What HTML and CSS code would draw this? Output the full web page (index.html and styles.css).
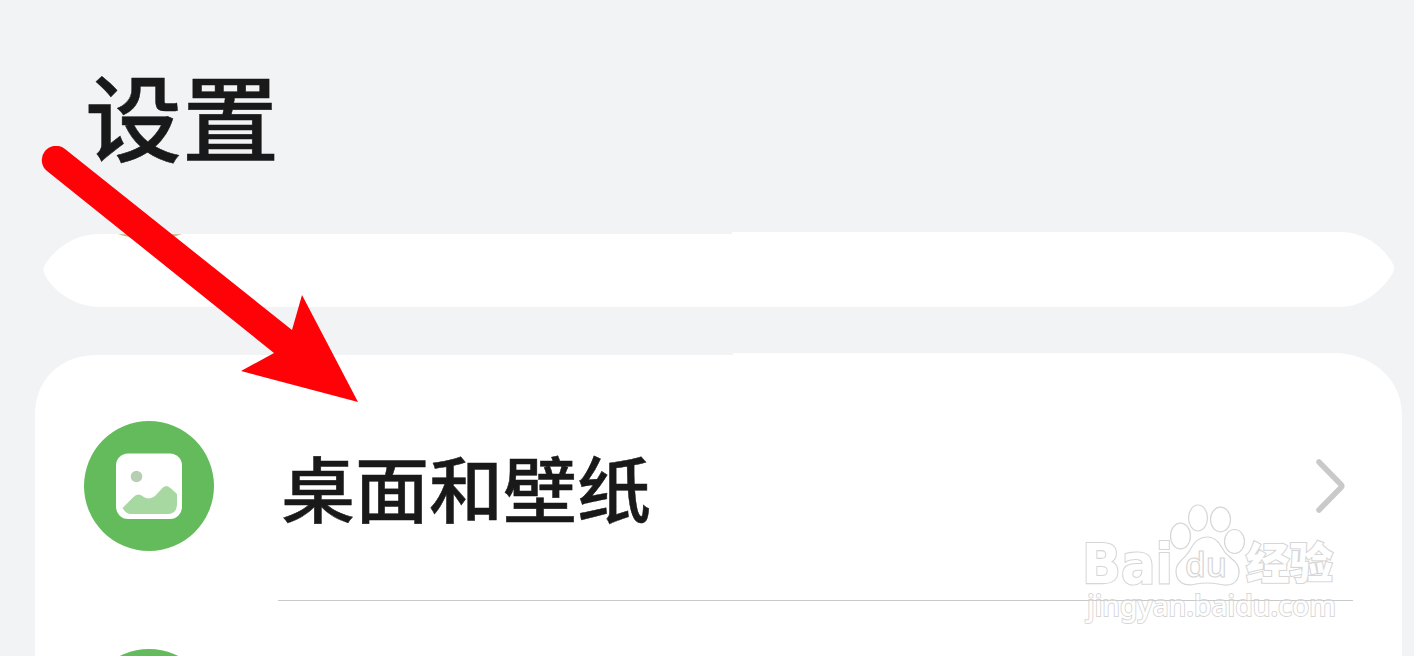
FILE: index.html
```html
<!DOCTYPE html>
<html lang="zh-CN">
<head>
<meta charset="utf-8">
<title>设置</title>
<link rel="stylesheet" href="styles.css">
</head>
<body>
<main class="screen">
  <header class="header"><h1 class="title">设置</h1></header>
  <section class="strip"><span class="strip-mark"></span></section>
  <section class="card">
    <div class="row">
      <svg class="badge" viewBox="0 0 130 130">
        <circle cx="65" cy="65" r="65" fill="#64bb5c"/>
        <rect x="32" y="32.5" width="66" height="65.5" rx="12" fill="#fff"/>
        <circle cx="52.5" cy="55.5" r="5.8" fill="#b7cfb1"/>
        <path d="M38.500 87L49 76.500Q54 71 59 75.500Q65 79.500 71 75L77 68.500Q81.500 62 87 67.500L93 73V83Q93 93 83 93H47Q42 93 38.500 87Z" fill="#a8d8a1"/>
      </svg>
      <div class="row-body">
        <span class="label">桌面和壁纸</span>
        <svg class="chevron" viewBox="0 0 30 54"><path d="M3 3L25 25.500Q26.500 27 25 28.500L3 51" fill="none" stroke="#c9c9c9" stroke-width="5.5" stroke-linecap="round"/></svg>
      </div>
    </div>
    <div class="row row-next">
      <svg class="badge" viewBox="0 0 130 130"><circle cx="65" cy="65" r="65" fill="#64bb5c"/></svg>
    </div>
  </section>
</main>
<svg class="arrow" viewBox="0 0 340 280">
  <path d="M7 25A14 14 0 1 1 25 3L252 184L262 149L318 256L201 225L234 207Z" fill="#ff0208"/>
</svg>
<svg class="watermark" viewBox="1070 490 290 145">
  <g fill="#fff" stroke="#d6d6d6" stroke-width="1.2">
    <text x="1082" y="582.500" font-size="55" textLength="91" lengthAdjust="spacingAndGlyphs" class="wm-latin wm-outline">Bai</text>
    <ellipse cx="1180.5" cy="536" rx="10" ry="12.8"/>
    <ellipse cx="1198" cy="518" rx="9.5" ry="13"/>
    <ellipse cx="1220.5" cy="519.5" rx="10" ry="12.3"/>
    <ellipse cx="1234.5" cy="541.5" rx="10" ry="12"/>
    <path d="M1207 537C1216 537 1220 544 1224 551C1229 559 1240 561 1239 573C1238 584 1230 587 1218 584Q1207 582 1196 584C1184 587 1176 582 1176 571C1176 562 1185 559 1190 550C1194 542 1199 537 1207 537Z"/>
    <text class="wm-du" x="1185" y="577" font-size="34" textLength="42" lengthAdjust="spacingAndGlyphs">du</text>
    <text class="wm-cjk wm-outline" x="1246" y="579" font-size="43" textLength="87" lengthAdjust="spacingAndGlyphs">经验</text>
    <text class="wm-url" x="1087" y="616" font-size="28" textLength="249" lengthAdjust="spacingAndGlyphs">jingyan.baidu.com</text>
  </g>
  <path d="M1070 600.500H1353" stroke="#c9c9c9" stroke-width="1" opacity=".7"/>
</svg>
</body>
</html>
```
FILE: styles.css
```css
* { box-sizing: border-box; }
body {
  margin: 0;
  width: 1414px;
  height: 656px;
  overflow: hidden;
  position: relative;
  background: #f1f3f5;
  font-family: "Noto Sans CJK SC", sans-serif;
  color: #191919;
}
.screen { display: flex; flex-direction: column; height: 656px; overflow: hidden; }
.header { flex: none; height: 232px; padding: 65px 0 0 85px; }
.title {
  margin: 0;
  font-size: 97px;
  line-height: 97px;
  font-weight: 500;
  transform: scaleY(.97);
  -webkit-text-stroke: .5px #191919;
}
.strip {
  flex: none;
  height: 75px;
  margin: 0 19px 46px 42px;
  padding-left: 76px;
  background: #fff;
  clip-path: path("M58 2H690V0H1298C1324 0 1342 16 1351 32Q1354 38 1349 44C1338 60 1320 75 1298 75H58C34 75 14 61 4 45Q-1 38 4 31C16 14 34 2 58 2Z");
}
.strip-mark {
  display: block;
  width: 64px;
  height: 11px;
  background: linear-gradient(#c5b27c 30%, #f8e5af 60%, #fff);
  clip-path: polygon(0 20%, 100% 20%, 50% 100%);
}
.card {
  flex: 1;
  min-height: 0;
  overflow: hidden;
  margin: 0 12px 0 35px;
  background: #fff;
  clip-path: path("M62 2H698V0H1298C1338 0 1367 27 1367 62V310H0V62C0 28 24 2 62 2Z");
}
.row { display: flex; height: 248px; padding: 68px 49px 0; gap: 64px; }
.row-next { padding-top: 48px; }
.badge { flex: none; width: 130px; height: 130px; }
.row-body {
  flex: 1;
  display: flex;
  align-items: flex-start;
  justify-content: space-between;
  height: 180px;
  padding: 32px 7px 0 2px;
  border-bottom: 1.5px solid #c9c9c9;
}
.label {
  margin: -4px 0 0 1px;
  font-size: 74px;
  line-height: 74px;
  font-weight: 500;
  transform: scaleY(.97);
  -webkit-text-stroke: .5px #191919;
}
.chevron { width: 30px; height: 54px; margin-top: 6px; }
.arrow { position: absolute; left: 40px; top: 146px; width: 340px; height: 280px; }
.watermark { position: absolute; left: 1070px; top: 490px; width: 290px; height: 145px; }
.wm-latin { font-family: "DejaVu Sans", sans-serif; font-weight: 700; }
.wm-outline { stroke-width: 2.2; paint-order: stroke; }
.wm-du { font-family: "Open Sans", sans-serif; font-weight: 600; }
.wm-cjk { font-family: "Noto Sans CJK SC", sans-serif; font-weight: 900; }
.wm-url { font-family: "Noto Sans", sans-serif; font-weight: 500; stroke-width: 1.8; paint-order: stroke; }
```
